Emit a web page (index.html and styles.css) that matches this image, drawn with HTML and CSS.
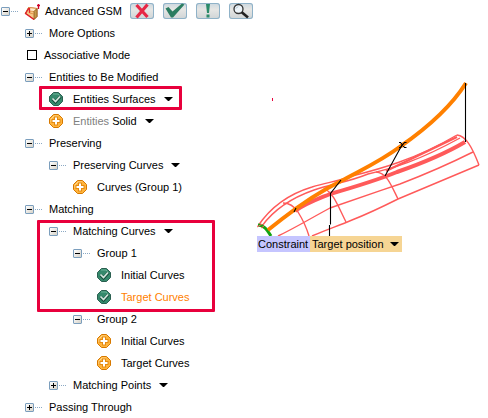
FILE: index.html
```html
<!DOCTYPE html>
<html lang="en">
<head>
<meta charset="utf-8">
<title>Advanced GSM</title>
<link rel="stylesheet" href="styles.css">
</head>
<body>
<svg class="defs" aria-hidden="true">
  <symbol id="done" viewBox="0 0 14 14">
    <path d="M4.500 .5h5l4 4v5l-4 4h-5l-4-4v-5z" fill="#35896c" stroke="#2b5f50"/>
    <path d="M4 2h5l3 3" fill="none" stroke="#6db397"/>
    <path d="M3.500 7l3 3 5-5.500" fill="none" stroke="#174c3b" stroke-width="3"/>
    <path d="M3.500 6.500l3 3 4.500-5" fill="none" stroke="#d4e8df" stroke-width="1.700"/>
  </symbol>
  <symbol id="add" viewBox="0 0 14 14">
    <path d="M4.500 .5h5l4 4v5l-4 4h-5l-4-4v-5z" fill="#ffb43c" stroke="#d67800"/>
    <path d="M2 8V5l3-3h4" fill="none" stroke="#ffd78c"/>
    <path d="M5 2.500h4V5h2.500v4H9v2.500H5V9H2.500V5H5z" fill="#e58a10"/>
    <path d="M6 3.500h2V6h2.500v2H8v2.500H6V8H3.500V6H6z" fill="#fff"/>
  </symbol>
  <symbol id="caret" viewBox="0 0 9 5">
    <path d="M0 0h9L5 4H4z"/>
  </symbol>
</svg>

<header class="row head">
  <button class="toggle" aria-label="Collapse Advanced GSM"></button><span class="dots"></span>
  <svg class="gsm" viewBox="0 0 17 18" aria-hidden="true">
    <path d="M4.500 5.500L13 6.500v8L10 17.500 1.500 11z" fill="#f6c987" stroke="#c86a28"/>
    <path d="M4.500 5.500L13 6.500 10 9.500 5.500 9z" fill="#ffedc8" stroke="#d88a3c" stroke-width=".8"/>
    <path d="M10 9.500l3-3v8l-3 3z" fill="#c39a48" stroke="#8f5a20" stroke-width=".8"/>
    <path d="M5 6L1.500 11.500l8.500 6M5.500 6v5" stroke="#e0202c" stroke-width="1.300" fill="none"/>
    <path d="M5.500 11l4.500 1" stroke="#d88a3c" stroke-width=".8"/>
    <path d="M14.500 2v5M13 3.500h3" stroke="#d00028" stroke-width="1.300" fill="none"/>
  </svg>
  <h1 class="title">Advanced GSM</h1>
  <div class="tools">
    <button class="tool" aria-label="Cancel"><svg viewBox="0 0 24 16"><path d="M6.500 2l11 12M17.500 1.500l-11 13" stroke="#e62846" stroke-width="3.200"/></svg></button>
    <button class="tool" aria-label="Accept"><svg viewBox="0 0 24 16"><path d="M2.500 5.500l3-1.500 4 4.500L19 .5l2.500 1L10 14.500H8z" fill="#2b7d61"/></svg></button>
    <button class="tool" aria-label="Apply"><svg viewBox="0 0 24 16"><path d="M10 1h4l-1 9h-2zM10.500 11.500h3v3h-3z" fill="#2b8a69"/></svg></button>
    <button class="tool" aria-label="Preview"><svg viewBox="0 0 24 16"><circle cx="9.500" cy="6" r="4.500" fill="#eef5fa" stroke="#333" stroke-width="1.300"/><path d="M7 5.500l2-2" stroke="#9fb8c8"/><path d="M12.500 9l6.500 5.500" stroke="#222" stroke-width="2.600"/></svg></button>
  </div>
</header>

<main class="work">
  <ul class="tree">
    <li><div class="row"><button class="toggle closed" aria-label="Expand More Options"></button><span class="dots"></span>More Options</div></li>
    <li><label class="row"><input class="check" type="checkbox">Associative Mode</label></li>
    <li>
      <div class="row"><button class="toggle" aria-label="Collapse Entities to Be Modified"></button><span class="dots"></span>Entities to Be Modified</div>
      <ul>
        <li class="marked marked-row"><div class="row"><svg class="state"><use href="#done"/></svg><button class="menu">Entities Surfaces<svg class="caret"><use href="#caret"/></svg></button></div></li>
        <li><div class="row"><svg class="state"><use href="#add"/></svg><button class="menu"><span><span class="dim">Entities</span> Solid</span><svg class="caret"><use href="#caret"/></svg></button></div></li>
      </ul>
    </li>
    <li>
      <div class="row"><button class="toggle" aria-label="Collapse Preserving"></button><span class="dots"></span>Preserving</div>
      <ul>
        <li>
          <div class="row"><button class="toggle" aria-label="Collapse Preserving Curves"></button><span class="dots"></span><button class="menu">Preserving Curves<svg class="caret"><use href="#caret"/></svg></button></div>
          <ul>
            <li><div class="row"><svg class="state"><use href="#add"/></svg>Curves (Group 1)</div></li>
          </ul>
        </li>
      </ul>
    </li>
    <li>
      <div class="row"><button class="toggle" aria-label="Collapse Matching"></button><span class="dots"></span>Matching</div>
      <ul>
        <li class="marked marked-group">
          <div class="row"><button class="toggle" aria-label="Collapse Matching Curves"></button><span class="dots"></span><button class="menu">Matching Curves<svg class="caret"><use href="#caret"/></svg></button></div>
          <ul>
            <li>
              <div class="row"><button class="toggle" aria-label="Collapse Group 1"></button><span class="dots"></span>Group 1</div>
              <ul>
                <li><div class="row"><svg class="state"><use href="#done"/></svg>Initial Curves</div></li>
                <li><div class="row current"><svg class="state"><use href="#done"/></svg>Target Curves</div></li>
              </ul>
            </li>
          </ul>
        </li>
        <li>
          <ul>
            <li>
              <div class="row"><button class="toggle" aria-label="Collapse Group 2"></button><span class="dots"></span>Group 2</div>
              <ul>
                <li><div class="row"><svg class="state"><use href="#add"/></svg>Initial Curves</div></li>
                <li><div class="row"><svg class="state"><use href="#add"/></svg>Target Curves</div></li>
              </ul>
            </li>
          </ul>
        </li>
        <li><div class="row"><button class="toggle closed" aria-label="Expand Matching Points"></button><span class="dots"></span><button class="menu">Matching Points<svg class="caret"><use href="#caret"/></svg></button></div></li>
      </ul>
    </li>
    <li><div class="row"><button class="toggle closed" aria-label="Expand Passing Through"></button><span class="dots"></span>Passing Through</div></li>
  </ul>

  <section class="view">
    <svg class="model" viewBox="252 80 236 156" role="img" aria-label="Surface with target curve">
      <path d="M272.500 98v3" stroke="#e8003c"/>
      <g fill="none" stroke="#ff5a5a" stroke-width="1.400">
        <path d="M258 226C270 208 289 194 312 187C327 182 337 182 352 176C380 169 414 160 457 135"/>
        <path d="M262 226C275 208 294 197 314 190C330 184 346 183 368 174C394 168 418 161 460 138"/>
        <path d="M278 236C293 229 306 221 330 208C350 201 376 192 400 184C426 174 449 164 473 152"/>
        <path d="M312 236C328 229 338 226 352 220C370 213 386 205 398 199L479 165"/>
        <path d="M283 203c7 0 11 3 15 9 5 8 8 14 11 24"/>
        <path d="M324 188c10 6 13 16 22 34"/>
        <path d="M376 172c11 1 15 13 22 27"/>
        <path d="M457 135c9 1 15 12 22 30"/>
        <path d="M386 171l71-34" stroke-width="2"/>
      </g>
      <path d="M295 211C306 203 318 199 330 194C351 188 375 181 397 172C420 164 443 155 465 142" fill="none" stroke="#ff5a5a" stroke-width="4"/>
      <path d="M258 225c6 0 9 5 13 11" fill="none" stroke="#13a313" stroke-width="3"/>
      <path d="M257 227l5-3M261 228l3-2" stroke="#ff5a5a"/>
      <path d="M268 230L282 219C300 205 319 192 341 181C365 168 381 161 401 146C424 130 449 110 466 83" fill="none" stroke="#ff8000" stroke-width="4"/>
      <path d="M465.500 83v59M402 145l-17 31M341 180l-10.500 13.500v31M329.500 225v11M296 208l-2 4" fill="none" stroke="#000" stroke-width="1.100"/>
      <path d="M399 142.500h1.500l4 5h2M399 147.500h1.500l4-5h2" fill="none" stroke="#000" stroke-width="1.200"/>
    </svg>
    <div class="tag">
      <label class="tag-name" for="constraint">Constraint</label>
      <div class="tag-value">
        <select id="constraint"><option>Target position</option></select>
        <svg class="caret"><use href="#caret"/></svg>
      </div>
    </div>
  </section>
</main>
</body>
</html>
```
FILE: styles.css
```css
* {
  box-sizing: border-box;
}

body {
  margin: 0;
  background: #fff;
  color: #000;
  font: 11px/22px "Liberation Sans", Arial, sans-serif;
}

button,
select {
  padding: 0;
  border: 0;
  background: none;
  color: inherit;
  font: inherit;
}

.defs {
  display: none;
}

.row {
  display: flex;
  align-items: center;
  height: 22px;
  white-space: nowrap;
}

.head {
  padding-left: 1px;
}

.title {
  margin: 0 0 0 4px;
  width: 85px;
  font: inherit;
}

.gsm {
  width: 17px;
  height: 18px;
  margin-left: -1px;
}

.tools {
  display: flex;
  gap: 9px;
}

.tool {
  width: 24px;
  height: 16px;
  border-radius: 3px;
  background: linear-gradient(#cbd7df, #e6e6e4 40%, #cfd4d6);
  box-shadow: inset 0 0 0 1px #8fb2c8;
}

.tool svg {
  display: block;
  width: 24px;
  height: 16px;
}

.work {
  display: flex;
}

.tree,
.tree ul {
  margin: 0;
  padding: 0 0 0 24px;
  list-style: none;
}

.tree {
  flex: none;
  width: 252px;
  padding-left: 25px;
}

.toggle {
  flex: none;
  width: 9px;
  height: 9px;
  border: 1px solid #7b9ebd;
  border-radius: 1px;
  background:
    linear-gradient(#000, #000) center / 5px 1px no-repeat,
    linear-gradient(135deg, #fff, #d6d2c8);
}

.toggle.closed {
  background:
    linear-gradient(#000, #000) center / 5px 1px no-repeat,
    linear-gradient(#000, #000) center / 1px 5px no-repeat,
    linear-gradient(135deg, #fff, #d6d2c8);
}

.dots {
  flex: none;
  width: 8px;
  height: 1px;
  margin: 0 6px 0 1px;
  background: repeating-linear-gradient(90deg, #8ba9c4 0 1px, #fff 1px 2px);
}

.state {
  flex: none;
  width: 14px;
  height: 14px;
  margin-right: 10px;
}

.check {
  appearance: none;
  width: 10px;
  height: 10px;
  margin: 0 7px 0 2px;
  border: 1px solid #000;
}

.menu {
  display: flex;
  align-items: center;
  gap: 8px;
}

.caret {
  flex: none;
  width: 9px;
  height: 5px;
}

.dim {
  color: #808080;
}

.current {
  color: #ff8000;
}

.marked {
  position: relative;
}

.marked::after {
  content: "";
  position: absolute;
  border: 3px solid #e8003c;
  border-radius: 1px;
  pointer-events: none;
}

.marked-row::after {
  inset: -2px 70px 0 -10px;
}

.marked-group::after {
  inset: 0 37px -4px -12px;
}

.view {
  flex: 1;
  min-width: 0;
  padding-top: 58px;
}

.model {
  display: block;
  width: 100%;
  max-width: 236px;
}

.tag {
  display: flex;
  margin-left: 5px;
  line-height: 16px;
}

.tag-name {
  width: 53px;
  padding-left: 1px;
  background: #c5c5ff;
}

.tag-value {
  display: flex;
  align-items: center;
  width: 92px;
  padding-left: 2px;
  background: #f6d594;
}

.tag select {
  appearance: none;
  width: 78px;
  height: 16px;
}
```
